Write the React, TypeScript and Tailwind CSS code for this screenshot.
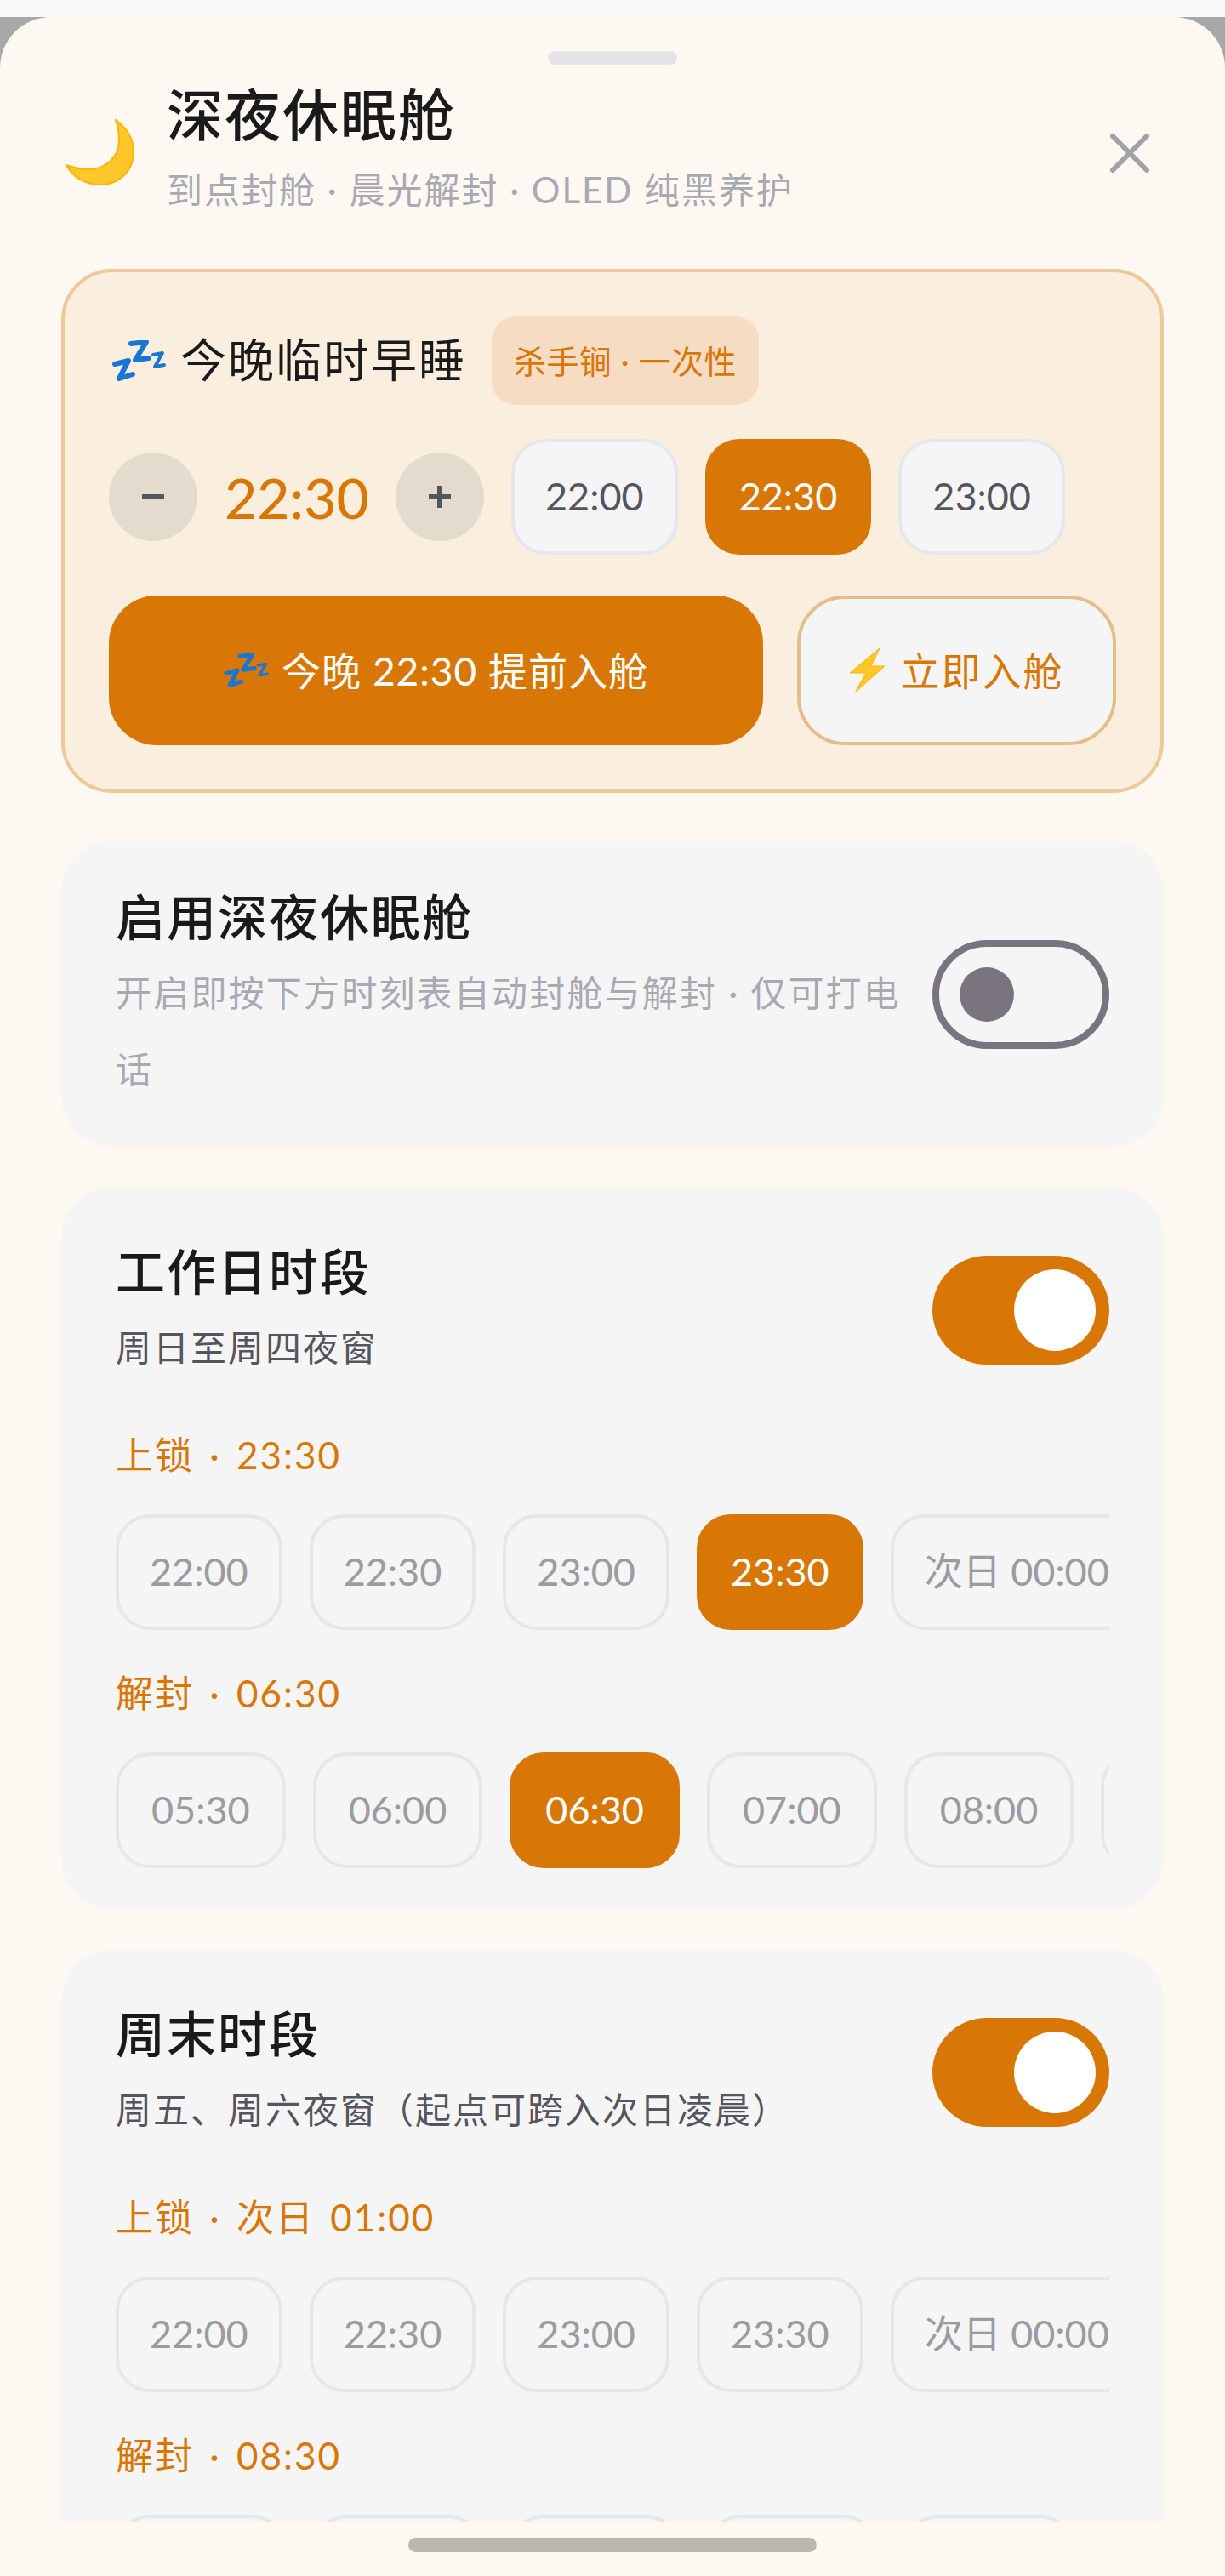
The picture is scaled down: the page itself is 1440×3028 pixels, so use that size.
import React from 'react';

const lockTimes = ['22:00', '22:30', '23:00', '23:30', '次日 00:00', '次日 00:30'];
const unlockTimes = ['05:30', '06:00', '06:30', '07:00', '08:00', '08:30'];

const MoonIcon: React.FC = () => (
  <svg width="82" height="80" viewBox="0 0 82 80" className="shrink-0">
    <path
      d="M59 2C72 11 80 24 80 40C80 62 63 78 41 78C24 78 9 70 1 55C9 58 17 60 28 60C46 60 63 46 63 27C63 17 62 9 59 2Z"
      fill="#ffc72a"
      stroke="#ffb300"
      strokeWidth="2"
      strokeLinejoin="round"
    />
  </svg>
);

const ZzzIcon: React.FC<{ className?: string }> = ({ className }) => (
  <svg viewBox="0 0 64 48" fill="none" stroke="#1976d2" strokeLinecap="round" strokeLinejoin="round" className={className}>
    <path d="M3 28L19 24L8 45L24 40" strokeWidth="6" />
    <path d="M22 4L40 2L27 23L43 21" strokeWidth="6" />
    <path d="M48 17L59 15L50 31L61 29" strokeWidth="4" />
  </svg>
);

const BoltIcon: React.FC = () => (
  <svg width="42" height="56" viewBox="0 0 42 56" className="shrink-0">
    <path d="M35 2L0 31H19L6 54L41 23H25Z" fill="#ffc72a" stroke="#ffb300" strokeWidth="1" strokeLinejoin="round" />
  </svg>
);

const Toggle: React.FC<{ on: boolean }> = ({ on }) =>
  on ? (
    <div className="flex h-[128px] w-[208px] shrink-0 items-center justify-end rounded-full bg-[#d97706] pr-[16px]">
      <div className="h-[96px] w-[96px] rounded-full bg-white" />
    </div>
  ) : (
    <div className="flex h-[128px] w-[208px] shrink-0 items-center rounded-full border-[8px] border-[#79747e] pl-[24px]">
      <div className="h-[64px] w-[64px] rounded-full bg-[#79747e]" />
    </div>
  );

const Chip: React.FC<{ label: string; active?: boolean; dim?: boolean; pad?: string }> = ({
  label,
  active,
  dim,
  pad = 'px-[36px]',
}) => (
  <div
    className={`flex h-[136px] shrink-0 items-center justify-center whitespace-nowrap rounded-[40px] border-[4px] text-[45px] ${pad} ${
      active
        ? 'border-[#d97706] bg-[#d97706] text-white'
        : dim
          ? 'border-[#e5e7eb] text-[#9b9ba0]'
          : 'border-[#e5e7eb] bg-[#f5f5f5] text-[#55555e]'
    }`}
  >
    {label}
  </div>
);

const TimeRow: React.FC<{ label: string; times: string[]; value: string; mt: string; pad: string }> = ({
  label,
  times,
  value,
  mt,
  pad,
}) => (
  <>
    <div className={`${mt} text-[44px] leading-[60px] tracking-[2px] [word-spacing:5px] text-[#d97706]`}>{label}</div>
    <div className="mt-[40px] flex gap-[32px] overflow-hidden">
      {times.map((t) => (
        <Chip key={t} label={t} active={t === value} dim pad={pad} />
      ))}
    </div>
  </>
);

const ScheduleCard: React.FC<{
  title: string;
  sub: string;
  lock: string;
  unlock: string;
  lockValue: string;
  unlockValue: string;
}> = ({ title, sub, lock, unlock, lockValue, unlockValue }) => (
  <div className="mt-[48px] rounded-[60px] bg-[#f5f5f5] px-[64px] pb-[48px] pt-[64px]">
    <div className="flex items-start justify-between">
      <div>
        <div className="text-[58px] font-medium leading-[70px] tracking-[2px] text-[#1a1a1a]">{title}</div>
        <div className="mt-[26px] text-[42px] leading-[56px] tracking-[2px] text-[#55555e]">{sub}</div>
      </div>
      <div className="mt-[16px]">
        <Toggle on />
      </div>
    </div>
    <TimeRow mt="mt-[68px]" label={lock} times={lockTimes} value={lockValue} pad="px-[36px]" />
    <TimeRow mt="mt-[44px]" label={unlock} times={unlockTimes} value={unlockValue} pad="px-[38px]" />
  </div>
);

const App: React.FC = () => {
  return (
    <div className="h-[3028px] overflow-hidden bg-[#fafafa] pt-[20px] font-['Lato','Noto_Sans_CJK_SC',sans-serif]">
      <div className="h-full bg-[#a8a8a8]">
        <div className="flex h-full flex-col rounded-t-[60px] bg-[#fdf8f2]">
          {/* Handle */}
          <div className="mx-auto mt-[40px] h-[16px] w-[152px] shrink-0 rounded-full bg-[#e4e4e7]" />

          {/* Header */}
          <div className="flex shrink-0 items-center justify-between px-[72px] pt-[17px]">
            <div className="flex items-center">
              <div className="mt-[14px] w-[124px] pl-[5px]">
                <MoonIcon />
              </div>
              <div>
                <div className="text-[66px] font-medium leading-[84px] tracking-[2px] text-[#1a1a1a]">深夜休眠舱</div>
                <div className="mt-[18px] text-[42px] leading-[56px] tracking-[2px] text-[#a9a9b2]">
                  到点封舱 · 晨光解封 · OLED 纯黑养护
                </div>
              </div>
            </div>
            <svg width="48" height="48" viewBox="0 0 48 48" className="mr-[16px] mt-[16px]" fill="none" stroke="#a1a1aa" strokeWidth="6" strokeLinecap="round">
              <path d="M4 4L44 44M44 4L4 44" />
            </svg>
          </div>

          {/* Scroll area */}
          <div className="mt-[65px] min-h-0 flex-1 overflow-hidden px-[72px]">
            {/* Early sleep card */}
            <div className="rounded-[60px] border-[4px] border-[#eec899] bg-[#faeedf] p-[52px]">
              <div className="flex items-center">
                <ZzzIcon className="ml-[4px] h-[48px] w-[64px] shrink-0" />
                <div className="ml-[16px] text-[54px] leading-[72px] tracking-[2px] text-[#1a1a1a]">今晚临时早睡</div>
                <div className="ml-[30px] flex h-[104px] w-[314px] items-center justify-center whitespace-nowrap rounded-[28px] bg-[#f5dcc2] text-[38px] tracking-[0.5px] text-[#d97706]">
                  杀手锏 · 一次性
                </div>
              </div>

              <div className="mt-[40px] flex items-center gap-[32px]">
                <div className="flex h-[104px] w-[104px] shrink-0 items-center justify-center rounded-full bg-[#e4dace]">
                  <div className="h-[6px] w-[26px] bg-[#55555e]" />
                </div>
                <div className="w-[169px] text-center text-[66px] font-medium text-[#d97706]">22:30</div>
                <div className="relative flex h-[104px] w-[104px] shrink-0 items-center justify-center rounded-full bg-[#e4dace]">
                  <div className="h-[6px] w-[26px] bg-[#55555e]" />
                  <div className="absolute h-[26px] w-[6px] bg-[#55555e]" />
                </div>
                <Chip label="22:00" />
                <Chip label="22:30" active />
                <Chip label="23:00" />
              </div>

              <div className="mt-[48px] flex gap-[40px]">
                <div className="flex h-[176px] flex-1 items-center justify-center gap-[14px] rounded-[56px] bg-[#d97706] text-[46px] tracking-[1px] text-white">
                  <ZzzIcon className="h-[40px] w-[54px] shrink-0" />
                  <span>今晚 22:30 提前入舱</span>
                </div>
                <div className="flex h-[176px] w-[375px] items-center justify-center gap-[18px] rounded-[56px] border-[4px] border-[#e5bd8c] bg-[#f5f5f5] text-[46px] tracking-[2px] text-[#d97706]">
                  <BoltIcon />
                  <span>立即入舱</span>
                </div>
              </div>
            </div>

            {/* Master switch */}
            <div className="mt-[56px] flex items-center justify-between gap-[36px] rounded-[60px] bg-[#f5f5f5] pb-[46px] pl-[64px] pr-[64px] pt-[48px]">
              <div className="min-w-0 flex-1">
                <div className="text-[58px] font-medium leading-[84px] tracking-[2px] text-[#1a1a1a]">启用深夜休眠舱</div>
                <div className="mt-[2px] text-[42px] leading-[90px] tracking-[2.2px] text-[#a9a9b2]">
                  开启即按下方时刻表自动封舱与解封 · 仅可打电话
                </div>
              </div>
              <Toggle on={false} />
            </div>

            <ScheduleCard
              title="工作日时段"
              sub="周日至周四夜窗"
              lock="上锁 · 23:30"
              unlock="解封 · 06:30"
              lockValue="23:30"
              unlockValue="06:30"
            />
            <ScheduleCard
              title="周末时段"
              sub="周五、周六夜窗（起点可跨入次日凌晨）"
              lock="上锁 · 次日 01:00"
              unlock="解封 · 08:30"
              lockValue="次日 01:00"
              unlockValue="08:30"
            />
          </div>

          {/* Home indicator */}
          <div className="flex h-[64px] shrink-0 items-start justify-center pt-[19px]">
            <div className="h-[17px] w-[480px] rounded-full bg-[#bab7b2]" />
          </div>
        </div>
      </div>
    </div>
  );
};

export default App;
